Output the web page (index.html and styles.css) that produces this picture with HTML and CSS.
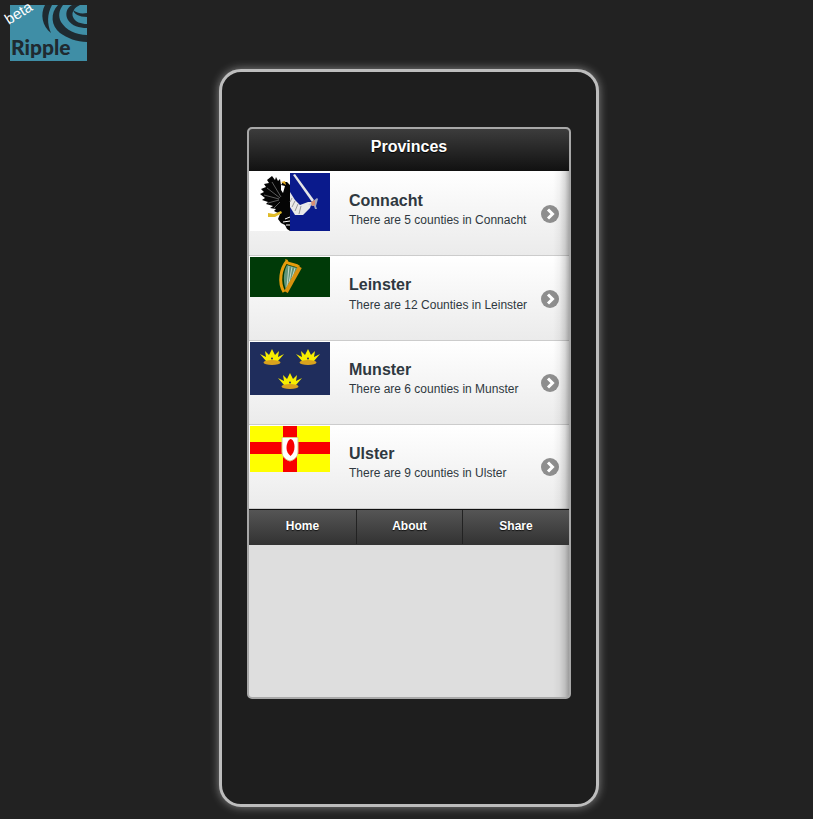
FILE: index.html
```html
<!DOCTYPE html>
<html lang="en">
<head>
<meta charset="utf-8">
<title>Ripple</title>
<link rel="stylesheet" href="styles.css">
</head>
<body>
<div class="logo">
  <svg width="77" height="56" viewBox="0 0 77 56">
    <rect width="77" height="56" fill="#3f8ea6"/>
    <path d="M35 0C30 9 32 21 41 28C37 19 37 9 42 0Z" fill="#1f2a30"/>
    <path d="M48 0C40 8 41 21 50 28C57 33 67 37 77 37L77 30C66 30 56 25 51 17C48 11 49 5 53 0Z" fill="#1f2a30"/>
    <path d="M62 0C56 3 55 10 58 15C62 21 69 23 77 23L77 19C71 19 65 17 63 12C61 7 65 2 70 0Z" fill="#1f2a30"/>
    <path d="M63 5C64 9 69 12 77 12L77 8C71 9 67 8 63 5Z" fill="#1f2a30"/>
    <text class="logo-word" x="1" y="50">Ripple</text>
  </svg>
  <span class="beta">beta</span>
</div>
<main class="device">
  <section class="screen">
    <header class="titlebar">Provinces</header>
    <ul class="list">
      <li class="row row-one">
        <svg class="flag" width="80" height="58" viewBox="0 0 80 58">
          <rect width="40" height="58" fill="#fff"/>
          <rect x="40" width="40" height="58" fill="#0a1a8c"/>
          <path d="M22 3L25 7L26 4L28 8L30 6L31 12L33 9L37 9L40 12L40 58L37 56L35 52L31 50L28 46L30 41L24 38L26 36L20 35L23 33L16 31L18 29L12 27L15 25L10 21L14 19L11 16L16 14L14 11L19 10L17 7Z" fill="#050505"/>
          <path d="M31 24L22 9M30 25L17 15M29 26L14 22M29 27L18 30M30 29L24 35" stroke="#fff" stroke-width=".5" fill="none" opacity=".7"/>
          <path d="M31 12L35 13L33 20L31 17Z" fill="#fff"/>
          <path d="M35 46L40 44M33 49L40 48M36 52L40 52" stroke="#fff" stroke-width="1" fill="none"/>
          <path d="M31 9L35 8L36 12Z" fill="#e0a81c"/>
          <path d="M18 40L24 41L31 38L32 40L25 44L18 44Z" fill="#e0bb28"/>
          <path d="M40 19L45 27L50 32L58 29L62 29L60 35L53 42L45 42L40 34Z" fill="#e9e9e9"/>
          <path d="M42 25L40 29M45 28L42 34M48 31L45 38M51 33L49 41" stroke="#9a9a9a" stroke-width="1" fill="none"/>
          <path d="M43 2L45 1L64 27L62 29Z" fill="#e6e6e6"/>
          <path d="M58 32L67 25L68 26L66 33L67 36L65 36L64 33Z" fill="#c9c9d0" opacity=".8"/>
          <path d="M61 29L65 27L65 32L62 33Z" fill="#d98e72"/>
        </svg>
        <div class="info">
          <h3 class="name">Connacht</h3>
          <p class="sub">There are 5 counties in Connacht</p>
        </div>
        <span class="arrow arrow-first"><svg width="18" height="18" viewBox="0 0 18 18"><circle cx="9" cy="9" r="9" fill="#8e8e8e"/><path d="M7 4.5L11.5 9L7 13.5" fill="none" stroke="#fff" stroke-width="3"/></svg></span>
      </li>
      <li class="row">
        <svg class="flag" width="80" height="40" viewBox="0 0 80 40">
          <rect width="80" height="40" fill="#003a08"/>
          <path d="M37 8L48 11L36 33C33 26 33 15 37 8Z" fill="#5f9577"/>
          <path d="M39 9L37 30M42 10L39 26M45 11L42 21" stroke="#c3d8c8" stroke-width="1" fill="none"/>
          <path d="M37 4C31 11 28 25 34 35" fill="none" stroke="#e59c0c" stroke-width="3"/>
          <path d="M36 5C41 8 46 7 49 10" fill="none" stroke="#e59c0c" stroke-width="3"/>
          <path d="M50 10L36 35" fill="none" stroke="#d8920f" stroke-width="4"/>
          <path d="M38 3L35 2L37 6Z" fill="#e59c0c"/>
        </svg>
        <div class="info">
          <h3 class="name">Leinster</h3>
          <p class="sub">There are 12 Counties in Leinster</p>
        </div>
        <span class="arrow"><svg width="18" height="18" viewBox="0 0 18 18"><circle cx="9" cy="9" r="9" fill="#8e8e8e"/><path d="M7 4.5L11.5 9L7 13.5" fill="none" stroke="#fff" stroke-width="3"/></svg></span>
      </li>
      <li class="row">
        <svg class="flag" width="80" height="53" viewBox="0 0 80 53">
          <defs>
            <g id="crown">
              <path d="M0 5L6 8L5 2L9 6L12 0L15 6L19 2L18 8L24 5L18 12L6 12Z" fill="#f7ee00"/>
              <ellipse cx="12" cy="13.5" rx="8.5" ry="2.6" fill="#d9a21e"/>
              <circle cx="12" cy="9.5" r="1" fill="#2a2a70"/>
            </g>
          </defs>
          <rect width="80" height="53" fill="#1f2d5c"/>
          <use href="#crown" x="10" y="7"/>
          <use href="#crown" x="46" y="7"/>
          <use href="#crown" x="28" y="31"/>
        </svg>
        <div class="info">
          <h3 class="name">Munster</h3>
          <p class="sub">There are 6 counties in Munster</p>
        </div>
        <span class="arrow"><svg width="18" height="18" viewBox="0 0 18 18"><circle cx="9" cy="9" r="9" fill="#8e8e8e"/><path d="M7 4.5L11.5 9L7 13.5" fill="none" stroke="#fff" stroke-width="3"/></svg></span>
      </li>
      <li class="row">
        <svg class="flag" width="80" height="46" viewBox="0 0 80 46">
          <rect width="80" height="46" fill="#ffff00"/>
          <rect x="33" width="14" height="46" fill="#f80000"/>
          <rect y="16" width="80" height="12" fill="#f80000"/>
          <path d="M32 11.5L48 11.5L48 26C48 31 44 34 40 35C36 34 32 31 32 26Z" fill="#fff" stroke="#d8cf80"/>
          <path d="M40.5 13C43 13 44.5 17 44.5 21C44.5 25 43 28 40.5 30C38 28 36.5 25 36.5 22C36.5 18 38 14 40.5 13Z" fill="#f80000"/>
        </svg>
        <div class="info">
          <h3 class="name">Ulster</h3>
          <p class="sub">There are 9 counties in Ulster</p>
        </div>
        <span class="arrow"><svg width="18" height="18" viewBox="0 0 18 18"><circle cx="9" cy="9" r="9" fill="#8e8e8e"/><path d="M7 4.5L11.5 9L7 13.5" fill="none" stroke="#fff" stroke-width="3"/></svg></span>
      </li>
    </ul>
    <nav class="navbar">
      <a class="tab">Home</a>
      <a class="tab">About</a>
      <a class="tab">Share</a>
    </nav>
    <div class="fade"></div>
  </section>
</main>
</body>
</html>
```

FILE: styles.css
```css
* { box-sizing: border-box; }
html, body { margin: 0; height: 819px; overflow: hidden; }
body {
  background: #222;
  font-family: "Liberation Sans", Arial, sans-serif;
  position: relative;
}
.logo {
  position: absolute;
  left: 10px;
  top: 5px;
  width: 77px;
  height: 56px;
}
.logo svg { display: block; }
.logo-word {
  font-family: "Lato", sans-serif;
  font-weight: 900;
  font-size: 21px;
  fill: #1f2a30;
}
.beta {
  position: absolute;
  left: -6px;
  top: 0;
  color: #fff;
  font-size: 15px;
  line-height: 16px;
  transform: rotate(-32deg);
}
.device {
  width: 380px;
  height: 738px;
  margin-left: 219px;
  position: absolute;
  top: 69px;
  border: 3px solid #bdbdbd;
  border-radius: 22px;
  background: #1e1e1e;
  box-shadow: 0 0 10px rgba(255, 255, 255, .45);
  padding: 55px 0 0 25px;
}
.screen {
  position: relative;
  width: 324px;
  height: 572px;
  border: 2px solid #a8a8a8;
  border-radius: 5px;
  background: #dedede;
}
.titlebar {
  height: 42px;
  background: linear-gradient(#3c3c3c, #111);
  color: #fff;
  font-size: 16px;
  font-weight: bold;
  line-height: 36px;
  text-align: center;
  text-shadow: 0 1px 1px #000;
  border-radius: 3px 3px 0 0;
}
.list {
  list-style: none;
  margin: 0;
  padding: 0;
  border-bottom: 1px solid #ccc;
}
.row {
  display: flex;
  height: 84.33px;
  padding: 1px 0 0 1px;
  border-top: 1px solid #ccc;
  background: linear-gradient(#fff, #ebebeb);
  position: relative;
}
.row-one { border-top: 0; padding-top: 2px; }
.flag { flex: none; display: block; }
.info { margin: 18px 0 0 19px; color: #2f3840; }
.name { margin: 0; font-size: 16px; line-height: 20px; font-weight: bold; }
.sub { margin: 1.2px 0 0; font-size: 12px; line-height: 16px; }
.arrow { position: absolute; left: 292px; top: 33.4px; display: block; height: 18px; }
.arrow-first { top: 34.4px; }
.arrow svg { display: block; }
.navbar {
  position: relative;
  z-index: 1;
  display: grid;
  grid-template-columns: 108px 106px 106px;
  height: 36px;
  border-top: 1px solid #111;
  border-bottom: 1px solid #333;
}
.tab {
  text-align: center;
  color: #fff;
  font-size: 12px;
  font-weight: bold;
  line-height: 32px;
  text-shadow: 0 1px 1px #111;
  background: linear-gradient(#555, #333);
  border-right: 1px solid #222;
}
.tab:last-child { border-right: 0; }
.fade {
  position: absolute;
  top: 42px;
  right: 0;
  bottom: 0;
  width: 16px;
  background: linear-gradient(to right, rgba(0,0,0,0), rgba(0,0,0,.04) 40%, rgba(0,0,0,.14) 75%, rgba(0,0,0,.3));
  pointer-events: none;
  border-radius: 0 0 3px 0;
}
```
